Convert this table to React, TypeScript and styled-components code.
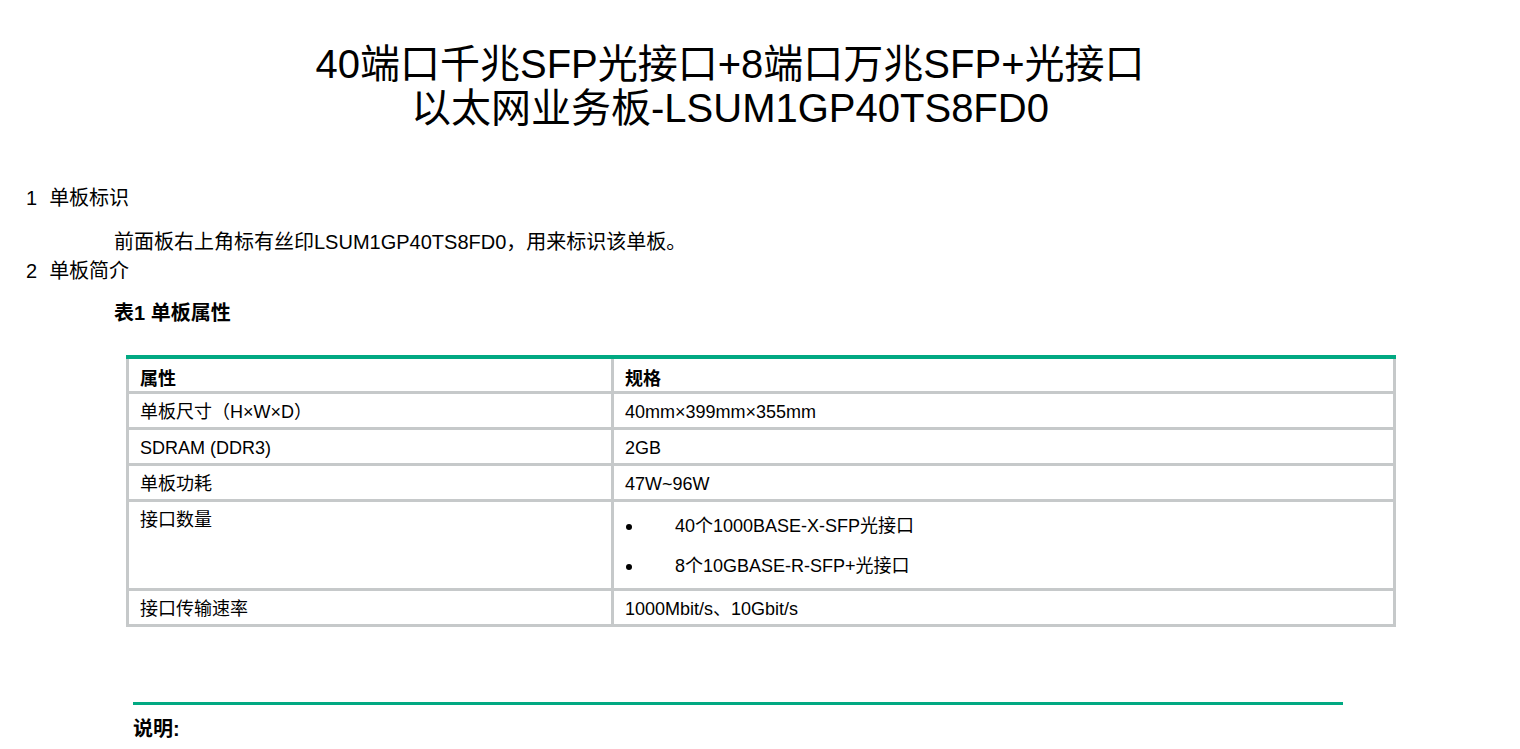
import React from "react";
import styled, { createGlobalStyle } from "styled-components";

const GlobalStyle = createGlobalStyle`
  html, body {
    margin: 0;
    padding: 0;
    background: #ffffff;
  }
  body {
    font-family: "Liberation Sans", "Noto Sans CJK SC", Arial, sans-serif;
    color: #000000;
  }
`;

const GREEN = "#01a982";
const GREY = "#c6c9ca";

const Page = styled.div`
  width: 1520px;
  min-height: 749px;
  overflow: hidden;
`;

const Title = styled.h1`
  width: 1460px;
  margin: 42px 0 0;
  font-size: 40px;
  line-height: 44px;
  font-weight: 400;
  text-align: center;
`;

const SectionHeading = styled.h2<{ $gap: number }>`
  display: flex;
  margin: ${(p) => p.$gap}px 0 0;
  padding-left: 26px;
  font-size: 20px;
  line-height: 24px;
  font-weight: 400;
`;

const SectionNumber = styled.span`
  margin-right: 12px;
`;

const Paragraph = styled.p`
  margin: 20px 0 0;
  padding-left: 114px;
  font-size: 20px;
  line-height: 24px;
`;

const Caption = styled.div`
  margin: 18px 0 0;
  padding-left: 114px;
  font-size: 20px;
  line-height: 24px;
  font-weight: 700;
`;

const Table = styled.table`
  margin: 30px 0 0 126px;
  width: 1270px;
  border-collapse: collapse;
  border-top: 4px solid ${GREEN};
  font-size: 18px;
  line-height: 21px;
  table-layout: fixed;
`;

const HeadCell = styled.th<{ $w?: number }>`
  width: ${(p) => (p.$w ? `${p.$w}px` : "auto")};
  border: 3px solid ${GREY};
  border-top: 4px solid ${GREEN};
  padding: 10px 11px 1px;
  text-align: left;
  font-weight: 700;
  vertical-align: top;
`;

const Cell = styled.td`
  border: 3px solid ${GREY};
  padding: 8px 11px 4px;
  text-align: left;
  vertical-align: top;
`;

const BulletList = styled.ul`
  list-style: none;
  margin: 6px 0 7px;
  padding: 0;
  display: flex;
  flex-direction: column;
  gap: 19px;
`;

const BulletItem = styled.li`
  display: flex;
  align-items: center;
`;

const Dot = styled.span`
  display: inline-block;
  width: 6px;
  height: 6px;
  border-radius: 50%;
  background: #000000;
  margin: 0 43px 0 1px;
  flex: none;
`;

const Note = styled.div`
  margin: 75px 0 0 133px;
  width: 1210px;
  border-top: 3px solid ${GREEN};
  padding-top: 12px;
  font-size: 20px;
  line-height: 24px;
  font-weight: 700;
`;

const rows: { name: string; value: React.ReactNode }[] = [
  { name: "单板尺寸（H×W×D）", value: "40mm×399mm×355mm" },
  { name: "SDRAM (DDR3)", value: "2GB" },
  { name: "单板功耗", value: "47W~96W" },
  {
    name: "接口数量",
    value: (
      <BulletList>
        <BulletItem>
          <Dot />
          40个1000BASE-X-SFP光接口
        </BulletItem>
        <BulletItem>
          <Dot />
          8个10GBASE-R-SFP+光接口
        </BulletItem>
      </BulletList>
    ),
  },
  { name: "接口传输速率", value: "1000Mbit/s、10Gbit/s" },
];

export default function App() {
  return (
    <Page>
      <GlobalStyle />
      <Title>
        40端口千兆SFP光接口+8端口万兆SFP+光接口
        <br />
        以太网业务板-LSUM1GP40TS8FD0
      </Title>

      <SectionHeading $gap={56}>
        <SectionNumber>1</SectionNumber>单板标识
      </SectionHeading>
      <Paragraph>前面板右上角标有丝印LSUM1GP40TS8FD0，用来标识该单板。</Paragraph>

      <SectionHeading $gap={5}>
        <SectionNumber>2</SectionNumber>单板简介
      </SectionHeading>
      <Caption>表1 单板属性</Caption>

      <Table>
        <thead>
          <tr>
            <HeadCell $w={460}>属性</HeadCell>
            <HeadCell>规格</HeadCell>
          </tr>
        </thead>
        <tbody>
          {rows.map((r) => (
            <tr key={r.name}>
              <Cell>{r.name}</Cell>
              <Cell>{r.value}</Cell>
            </tr>
          ))}
        </tbody>
      </Table>

      <Note>说明:</Note>
    </Page>
  );
}
